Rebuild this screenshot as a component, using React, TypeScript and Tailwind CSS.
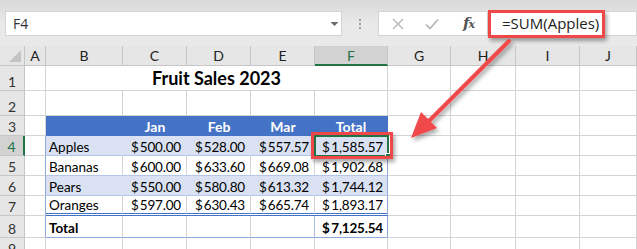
import React from "react";

const CELL = "border-r border-b border-[#d4d4d4] flex items-end pb-[1px] whitespace-nowrap overflow-visible";
const RH = "bg-[#e6e6e6] border-r border-b border-[#c6c6c6] flex items-end justify-center pb-[1px] text-[#333] text-[14px]";
const RH_SEL = "bg-[#d2d2d2] border-r-2 border-b border-r-[#217346] border-b-[#c6c6c6] flex items-end justify-center pb-[1px] text-[#217346] text-[14px]";
const CH = "bg-[#e6e6e6] border-r border-b border-[#c6c6c6] flex items-center justify-center text-[#222] text-[14px]";

function Acc({ v, bold, tight }: { v: string; bold?: boolean; tight?: boolean }) {
  return (
    <div className={"flex w-full justify-between tracking-[-0.2px] " + (tight ? "pl-[7px] pr-[4px] " : "pl-[8px] pr-[5px] ") + (bold ? "font-bold" : "")}>
      <span>$</span>
      <span>{v}</span>
    </div>
  );
}

function Empty({ n, extra }: { n: number; extra?: string }) {
  return (
    <>
      {Array.from({ length: n }).map((_, i) => (
        <div key={i} className={CELL + (extra ? " " + extra : "")} />
      ))}
    </>
  );
}

const rows = [
  { name: "Apples", v: ["500.00", "528.00", "557.57", "1,585.57"], band: true },
  { name: "Bananas", v: ["600.00", "633.60", "669.08", "1,902.68"], band: false },
  { name: "Pears", v: ["550.00", "580.80", "613.32", "1,744.12"], band: true },
  { name: "Oranges", v: ["597.00", "630.43", "665.74", "1,893.17"], band: false },
];

export default function App() {
  return (
    <div className="relative w-[637px] h-[249px] overflow-hidden bg-white [font-family:Lato,sans-serif] text-[13.5px] leading-none text-black">
      {/* Top formula bar area */}
      <div className="h-[46px] bg-gradient-to-b from-[#d9d9d9] via-[#e9e9e9] to-[#e9e9e9] flex items-start pt-[11px] pl-[5px] [font-family:'Open_Sans',sans-serif]">
        <div className="w-[337px] h-[25px] bg-white border border-[#d4d4d4] flex items-center justify-between pl-[7px] pr-[2px]">
          <span className="text-[14px] text-[#333]">F4</span>
          <svg width="9" height="6" viewBox="0 0 9 6">
            <polygon points="0.5,1 8.5,1 4.5,5" fill="#6b6b6b" />
          </svg>
        </div>
        <div className="w-[36px] h-[25px] flex flex-col items-center justify-center gap-[2px]">
          <div className="w-[2px] h-[2px] bg-[#a0a0a0]" />
          <div className="w-[2px] h-[2px] bg-[#a0a0a0]" />
          <div className="w-[2px] h-[2px] bg-[#a0a0a0]" />
        </div>
        <div className="flex-1 h-[25px] bg-white border border-[#d4d4d4] flex items-stretch">
          <div className="w-[109px] flex items-center border-r border-[#d4d4d4]">
            <svg className="ml-[13px]" width="12" height="12" viewBox="0 0 12 12">
              <path d="M1 1 L11 11 M11 1 L1 11" stroke="#b4b4b4" strokeWidth="1.3" fill="none" />
            </svg>
            <svg className="ml-[21px]" width="14" height="12" viewBox="0 0 14 12">
              <path d="M1 6.5 L5 10.5 L13 1.5" stroke="#b4b4b4" strokeWidth="1.6" fill="none" />
            </svg>
            <span className="ml-[24px] text-[#555] [font-family:'DejaVu_Serif',serif] italic text-[15px] font-bold tracking-[-1px]">
              f<span className="text-[11px]">x</span>
            </span>
          </div>
          <div className="flex items-center pl-[14px] text-[15px] text-[#222]">=SUM(Apples)</div>
        </div>
      </div>

      {/* Sheet grid */}
      <div className="grid grid-cols-[25px_21px_77px_64px_64px_64px_73px_63px_65px_64px_57px] grid-rows-[20px_25px_25px_20px_20px_20px_20px_20px_22px_20px]">
        {/* column headers */}
        <div className="bg-[#e6e6e6] border-r border-b border-[#c6c6c6] relative">
          <svg className="absolute left-0 top-0" width="25" height="20" viewBox="0 0 25 20">
            <polygon points="21,4 21,16 9,16" fill="#c4c4c4" />
          </svg>
        </div>
        {["A", "B", "C", "D", "E"].map((c) => (
          <div key={c} className={CH}>{c}</div>
        ))}
        <div className="bg-[#d2d2d2] border-r border-b-2 border-r-[#c6c6c6] border-b-[#217346] flex items-center justify-center text-[#217346] text-[14px] pt-[1px]">F</div>
        {["G", "H", "I", "J"].map((c) => (
          <div key={c} className={CH}>{c}</div>
        ))}

        {/* row 1 */}
        <div className={RH}>1</div>
        <div className={CELL} />
        <div className={CELL + " col-span-5 justify-center pb-[3px] text-[18px] font-bold"}>Fruit Sales 2023</div>
        <Empty n={4} />

        {/* row 2 */}
        <div className={RH}>2</div>
        <Empty n={10} />

        {/* row 3 header */}
        <div className={RH}>3</div>
        <div className={CELL} />
        <div className="bg-[#4472c4] border-b border-[#4472c4]" />
        {["Jan", "Feb", "Mar"].map((m) => (
          <div key={m} className="bg-[#4472c4] border-b border-[#4472c4] flex items-end justify-center pb-[1px] text-white font-bold text-[14px]">{m}</div>
        ))}
        <div className="bg-[#4472c4] border-r border-b border-[#4472c4] flex items-end justify-center pb-[1px] text-white font-bold text-[14px]">Total</div>
        <Empty n={4} />

        {/* rows 4-7 */}
        {rows.map((r, i) => (
          <React.Fragment key={r.name}>
            {i === 0 ? <div className={RH_SEL}>{4 + i}</div> : <div className={RH}>{4 + i}</div>}
            <div className={CELL + " border-r-[#8ea9db]"} />
            {r.band ? (
              <>
                <div className="bg-[#d9e1f2] border-r border-b border-r-[#d9e1f2] border-b-[#b4c6e7] flex items-end pb-[1px] pl-[3px]">{r.name}</div>
                {r.v.slice(0, 3).map((v, j) => (
                  <div key={j} className="bg-[#d9e1f2] border-r border-b border-r-[#d9e1f2] border-b-[#b4c6e7] flex items-end pb-[1px]">
                    <Acc v={v} />
                  </div>
                ))}
                <div className="bg-[#d9e1f2] border-r border-b border-r-[#8ea9db] border-b-[#b4c6e7] flex items-end pb-[1px]">
                  <Acc v={r.v[3]} tight />
                </div>
              </>
            ) : (
              <>
                <div className={"bg-white border-r flex items-end pb-[1px] pl-[3px] border-r-[#d4d4d4] " + (i === 3 ? "border-b-[3px] border-double border-b-[#4472c4]" : "border-b border-b-[#b4c6e7]")}>{r.name}</div>
                {r.v.slice(0, 3).map((v, j) => (
                  <div key={j} className={"bg-white border-r flex items-end pb-[1px] border-r-[#d4d4d4] " + (i === 3 ? "border-b-[3px] border-double border-b-[#4472c4]" : "border-b border-b-[#b4c6e7]")}>
                    <Acc v={v} />
                  </div>
                ))}
                <div className={"bg-white border-r flex items-end pb-[1px] border-r-[#8ea9db] " + (i === 3 ? "border-b-[3px] border-double border-b-[#4472c4]" : "border-b border-b-[#b4c6e7]")}>
                  <Acc v={r.v[3]} tight />
                </div>
              </>
            )}
            <Empty n={4} />
          </React.Fragment>
        ))}

        {/* row 8 total */}
        <div className={RH}>8</div>
        <div className={CELL + " border-r-[#8ea9db]"} />
        <div className="border-r border-b border-r-[#d4d4d4] border-b-[#8ea9db] flex items-end pb-[2px] pl-[3px] font-bold">Total</div>
        <div className="border-r border-b border-r-[#d4d4d4] border-b-[#8ea9db]" />
        <div className="border-r border-b border-r-[#d4d4d4] border-b-[#8ea9db]" />
        <div className="border-r border-b border-r-[#a9bde3] border-b-[#8ea9db]" />
        <div className="border-r border-b border-r-[#8ea9db] border-b-[#8ea9db] flex items-end pb-[2px]">
          <Acc v="7,125.54" bold tight />
        </div>
        <Empty n={4} />

        {/* row 9 */}
        <div className={RH}>9</div>
        <Empty n={10} />
      </div>

      {/* selected cell F4 */}
      <div className="absolute left-[314px] top-[135px] w-[75px] h-[22px] border-2 border-[#217346] pointer-events-none">
        <div className="absolute right-[-4px] bottom-[-4px] w-[6px] h-[6px] bg-[#217346] border border-white" />
      </div>

      {/* red highlight boxes */}
      <div className="absolute left-[488px] top-[10px] w-[117px] h-[28px] border-[3px] border-[#f04848] shadow-[2px_3px_4px_rgba(0,0,0,0.35)] pointer-events-none" />
      <div className="absolute left-[311px] top-[132px] w-[82px] h-[27px] border-[3px] border-[#f04848] shadow-[2px_3px_4px_rgba(0,0,0,0.35)] pointer-events-none" />

      {/* arrow */}
      <svg className="absolute left-0 top-0 pointer-events-none" width="637" height="249" viewBox="0 0 637 249">
        <defs>
          <filter id="sh" x="-20%" y="-20%" width="140%" height="140%">
            <feDropShadow dx="2" dy="3" stdDeviation="2" floodColor="#000" floodOpacity="0.35" />
          </filter>
        </defs>
        <g filter="url(#sh)">
          <line x1="509" y1="41" x2="428" y2="122" stroke="#f04848" strokeWidth="4" strokeLinecap="round" />
          <polygon points="411,138 437,128 421,112" fill="#f04848" />
        </g>
      </svg>
    </div>
  );
}
